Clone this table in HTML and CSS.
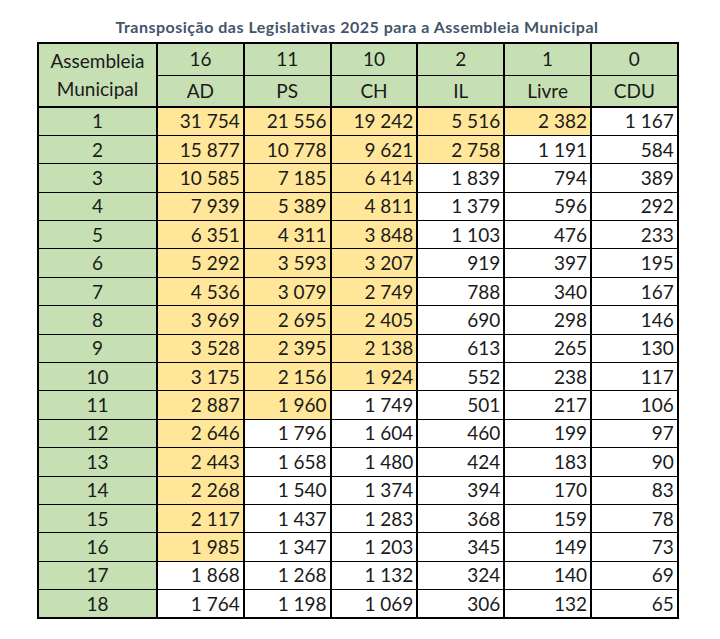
FILE: index.html
```html
<!DOCTYPE html>
<html lang="pt">
<head>
<meta charset="utf-8">
<title>Transposição das Legislativas 2025</title>
<link rel="stylesheet" href="styles.css">
</head>
<body>
<div class="wrap">
  <h1 class="title">Transposição das Legislativas 2025 para a Assembleia Municipal</h1>
  <table class="grid">
    <colgroup>
      <col class="c-first"><col class="c"><col class="c"><col class="c"><col class="c"><col class="c"><col class="c">
    </colgroup>
    <thead>
      <tr class="h1">
        <th rowspan="2" class="lbl">Assembleia<br>Municipal</th>
        <th>16</th><th>11</th><th>10</th><th>2</th><th>1</th><th>0</th>
      </tr>
      <tr class="h2">
        <th>AD</th><th>PS</th><th>CH</th><th>IL</th><th>Livre</th><th>CDU</th>
      </tr>
    </thead>
    <tbody>
      <tr><th>1</th><td class="hl">31 754</td><td class="hl">21 556</td><td class="hl">19 242</td><td class="hl">5 516</td><td class="hl">2 382</td><td>1 167</td></tr>
      <tr><th>2</th><td class="hl">15 877</td><td class="hl">10 778</td><td class="hl">9 621</td><td class="hl">2 758</td><td>1 191</td><td>584</td></tr>
      <tr><th>3</th><td class="hl">10 585</td><td class="hl">7 185</td><td class="hl">6 414</td><td>1 839</td><td>794</td><td>389</td></tr>
      <tr><th>4</th><td class="hl">7 939</td><td class="hl">5 389</td><td class="hl">4 811</td><td>1 379</td><td>596</td><td>292</td></tr>
      <tr><th>5</th><td class="hl">6 351</td><td class="hl">4 311</td><td class="hl">3 848</td><td>1 103</td><td>476</td><td>233</td></tr>
      <tr><th>6</th><td class="hl">5 292</td><td class="hl">3 593</td><td class="hl">3 207</td><td>919</td><td>397</td><td>195</td></tr>
      <tr><th>7</th><td class="hl">4 536</td><td class="hl">3 079</td><td class="hl">2 749</td><td>788</td><td>340</td><td>167</td></tr>
      <tr><th>8</th><td class="hl">3 969</td><td class="hl">2 695</td><td class="hl">2 405</td><td>690</td><td>298</td><td>146</td></tr>
      <tr><th>9</th><td class="hl">3 528</td><td class="hl">2 395</td><td class="hl">2 138</td><td>613</td><td>265</td><td>130</td></tr>
      <tr><th>10</th><td class="hl">3 175</td><td class="hl">2 156</td><td class="hl">1 924</td><td>552</td><td>238</td><td>117</td></tr>
      <tr><th>11</th><td class="hl">2 887</td><td class="hl">1 960</td><td>1 749</td><td>501</td><td>217</td><td>106</td></tr>
      <tr><th>12</th><td class="hl">2 646</td><td>1 796</td><td>1 604</td><td>460</td><td>199</td><td>97</td></tr>
      <tr><th>13</th><td class="hl">2 443</td><td>1 658</td><td>1 480</td><td>424</td><td>183</td><td>90</td></tr>
      <tr><th>14</th><td class="hl">2 268</td><td>1 540</td><td>1 374</td><td>394</td><td>170</td><td>83</td></tr>
      <tr><th>15</th><td class="hl">2 117</td><td>1 437</td><td>1 283</td><td>368</td><td>159</td><td>78</td></tr>
      <tr><th>16</th><td class="hl">1 985</td><td>1 347</td><td>1 203</td><td>345</td><td>149</td><td>73</td></tr>
      <tr><th>17</th><td>1 868</td><td>1 268</td><td>1 132</td><td>324</td><td>140</td><td>69</td></tr>
      <tr><th>18</th><td>1 764</td><td>1 198</td><td>1 069</td><td>306</td><td>132</td><td>65</td></tr>
    </tbody>
  </table>
</div>
</body>
</html>
```
FILE: styles.css
```css
html, body {
  margin: 0;
  padding: 0;
  background: #ffffff;
}

.wrap {
  width: 640px;
  padding-left: 37px;
  padding-top: 17px;
}

.title {
  margin: 0 0 5px 0;
  text-align: center;
  font-family: Lato, "Open Sans", sans-serif;
  font-weight: 700;
  font-size: 16px;
  letter-spacing: 0.5px;
  line-height: 20px;
  color: #44546a;
}

.grid {
  border-collapse: collapse;
  width: 640px;
  table-layout: fixed;
  font-family: Lato, "Liberation Sans", sans-serif;
  font-size: 19px;
  color: #1a1a1a;
  border: 2px solid #000;
}

.c-first { width: 119px; }
.c { width: 86.8px; }

.grid th, .grid td {
  padding: 0 3px 0 3px;
  border-left: 2px solid #000;
  border-right: 2px solid #000;
  border-top: 1px solid #000;
  border-bottom: 1px solid #000;
  line-height: 22px;
  font-weight: 400;
  white-space: nowrap;
}

.grid thead th {
  background: #c6e0b4;
  text-align: center;
}

.grid thead tr.h1 { height: 32px; }
.grid thead tr.h2 { height: 32px; }
.grid thead tr.h2 th { border-bottom: 2px solid #000; }
.grid thead th.lbl { border-bottom: 2px solid #000; line-height: 28px; }

.grid tbody tr { height: 28.4px; }

.grid tbody th {
  background: #c6e0b4;
  text-align: center;
}

.grid tbody td {
  text-align: right;
  background: #ffffff;
}

.grid tbody td.hl {
  background: #ffe699;
}
```
